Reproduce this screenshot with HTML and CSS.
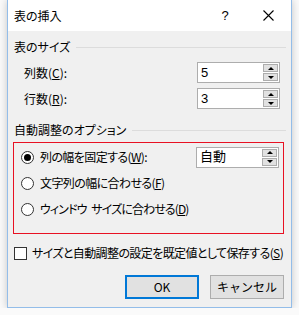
FILE: index.html
```html
<!DOCTYPE html>
<html lang="ja">
<head>
  <meta charset="UTF-8" />
  <title>表の挿入</title>
  <link rel="stylesheet" href="styles.css">
</head>
<body>
  <div class="dialog">
    <div class="titlebar">
      <span class="title">表の挿入</span>
      <span class="help">?</span>
      <span class="close">
        <svg width="11" height="11" viewBox="0 0 11 11"><path d="M0.5 0.5L10.5 10.5M10.5 0.5L0.5 10.5" stroke="#000" stroke-width="1.1" fill="none"/></svg>
      </span>
    </div>
    <div class="content">
      <div class="group-head"><span>表のサイズ</span><i class="rule"></i></div>
      <div class="row">
        <span class="label">列数(<u>C</u>):</span>
        <div class="spin">
          <span class="spin-val">5</span>
          <div class="spin-btns"><b class="up"></b><b class="down"></b></div>
        </div>
      </div>
      <div class="row">
        <span class="label">行数(<u>R</u>):</span>
        <div class="spin">
          <span class="spin-val">3</span>
          <div class="spin-btns"><b class="up"></b><b class="down"></b></div>
        </div>
      </div>
      <div class="group-head second"><span>自動調整のオプション</span><i class="rule"></i></div>
      <div class="options">
        <div class="opt first">
          <span class="radio checked"></span>
          <span class="label">列の幅を固定する(<u>W</u>):</span>
          <div class="spin">
            <span class="spin-val">自動</span>
            <div class="spin-btns"><b class="up"></b><b class="down"></b></div>
          </div>
        </div>
        <div class="opt">
          <span class="radio"></span>
          <span class="label">文字列の幅に合わせる(<u>F</u>)</span>
        </div>
        <div class="opt">
          <span class="radio"></span>
          <span class="label kana">ウィンドウ サイズに合わせる(<u>D</u>)</span>
        </div>
      </div>
      <div class="check-row">
        <span class="checkbox"></span>
        <span class="label">サイズと自動調整の設定を既定値として保存する(<u>S</u>)</span>
      </div>
      <div class="buttons">
        <button class="btn default">OK</button>
        <button class="btn">キャンセル</button>
      </div>
    </div>
  </div>
</body>
</html>
```

FILE: styles.css
```css
body {
  margin: 0;
  background: #fafafa;
  font-family: "Noto Sans CJK JP", "Noto Sans", sans-serif;
  font-size: 12px;
  font-feature-settings: "palt";
  color: #000;
}
.dialog {
  margin-left: 7px;
  width: 283px;
  height: 307px;
  border: 1px solid #93bde9;
  border-top: none;
  background: #f0f0f0;
  box-shadow: 0 0 8px rgba(0, 0, 0, 0.22);
  display: flex;
  flex-direction: column;
}
.titlebar {
  height: 31px;
  background: #fff;
  display: flex;
  align-items: center;
  padding-left: 6px;
}
.title {
  flex: 1;
  line-height: 16px;
}
.help {
  width: 16px;
  text-align: center;
  font-family: "Liberation Sans", sans-serif;
  font-size: 13px;
  margin-right: 30px;
}
.close {
  width: 11px;
  height: 11px;
  margin-right: 17px;
  display: flex;
}
.content {
  flex: 1;
  padding: 8px 6px 0 6px;
  display: flex;
  flex-direction: column;
}
.group-head {
  height: 16px;
  display: flex;
  align-items: center;
  line-height: 16px;
}
.group-head .rule {
  flex: 1;
  height: 1px;
  background: #dcdcdc;
  margin-left: 6px;
  margin-right: -1px;
}
.group-head.second {
  margin-top: 13px;
}
.row {
  display: flex;
  align-items: center;
  justify-content: space-between;
  padding-left: 10px;
  padding-right: 5px;
  margin-top: 7px;
  height: 21px;
}
.row + .row {
  margin-top: 5px;
}
.label {
  line-height: 16px;
  white-space: nowrap;
}
.options .label,
.check-row .label {
  letter-spacing: -0.6px;
}
.options .label.kana {
  letter-spacing: -0.9px;
  word-spacing: 3px;
}
.spin {
  width: 81px;
  height: 19px;
  border: 1px solid #adadad;
  background: #fff;
  display: flex;
  align-items: center;
  flex-shrink: 0;
}
.spin-val {
  flex: 1;
  padding-left: 3px;
  font-size: 13px;
  line-height: 16px;
  letter-spacing: 0;
  font-family: "Liberation Sans", "Noto Sans CJK JP", sans-serif;
}
.spin-btns {
  width: 15px;
  height: 17px;
  margin-right: 1px;
  display: flex;
  flex-direction: column;
  gap: 1px;
}
.spin-btns b {
  flex: 1;
  background: #e1e1e1;
  border: 1px solid #adadad;
  display: flex;
  align-items: center;
  justify-content: center;
}
.spin-btns b::after {
  content: "";
  border-left: 3px solid transparent;
  border-right: 3px solid transparent;
}
.spin-btns .up::after {
  border-bottom: 3px solid #000;
}
.spin-btns .down::after {
  border-top: 3px solid #000;
}
.options {
  margin-top: 4px;
  margin-left: -1px;
  width: 269px;
  height: 86px;
  border: 1px solid #e81123;
  display: flex;
  flex-direction: column;
  padding-top: 4px;
  box-sizing: content-box;
}
.opt {
  display: flex;
  align-items: center;
  height: 20px;
  padding-left: 7px;
}
.opt + .opt {
  margin-top: 6px;
}
.opt.first .label {
  flex: 1;
}
.opt.first .spin {
  margin-right: 4px;
}
.radio {
  flex-shrink: 0;
  width: 11px;
  height: 11px;
  border: 1px solid #333;
  border-radius: 50%;
  background: #fff;
  margin-right: 6px;
  display: flex;
  align-items: center;
  justify-content: center;
}
.radio.checked::after {
  content: "";
  width: 7px;
  height: 7px;
  border-radius: 50%;
  background: #000;
}
.check-row {
  display: flex;
  align-items: center;
  margin-top: 11px;
  height: 16px;
}
.checkbox {
  flex-shrink: 0;
  width: 11px;
  height: 11px;
  border: 1px solid #333;
  background: #fff;
  margin-right: 5px;
}
.buttons {
  display: flex;
  justify-content: flex-end;
  gap: 11px;
  margin-top: 14px;
  padding-right: 1px;
}
.btn {
  width: 74px;
  height: 24px;
  border: 1px solid #adadad;
  background: #e1e1e1;
  font-family: "Noto Sans CJK JP", sans-serif;
  font-size: 12px;
  padding: 0;
  line-height: 16px;
}
.btn.default {
  border: 2px solid #0078d7;
}
```
